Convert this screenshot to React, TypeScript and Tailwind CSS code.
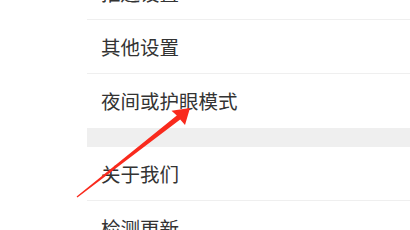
const rows = [
  { label: "推送设置", divider: true },
  { label: "其他设置", divider: true },
  { label: "夜间或护眼模式", divider: false },
];

const rowsAfter = [
  { label: "关于我们", divider: true },
  { label: "检测更新", divider: true },
];

function Row({ label, divider }: { label: string; divider: boolean }) {
  return (
    <div
      className={`flex h-[54px] items-center pl-[14px] text-[19.5px] text-[#333333] ${
        divider ? "border-b border-[#efefef]" : ""
      }`}
    >
      {label}
    </div>
  );
}

function Arrow() {
  return (
    <svg
      className="pointer-events-none absolute left-0 top-0"
      width="410"
      height="230"
      viewBox="0 0 410 230"
    >
      <polygon
        points="190,108 171.5,110.8 176.8,115.6 76.6,196.4 77.4,197.4 180.2,119.4 185,125"
        fill="#f92a1d"
      />
    </svg>
  );
}

export default function App() {
  return (
    <div
      className="relative h-[230px] w-[410px] overflow-hidden bg-white"
      style={{ fontFamily: '"Noto Sans CJK SC", "Noto Sans", sans-serif' }}
    >
      <div className="ml-[87px] -mt-[34px] flex flex-col">
        {rows.map((r) => (
          <Row key={r.label} {...r} />
        ))}
        <div className="h-[19px] bg-[#efefef]" />
        {rowsAfter.map((r) => (
          <Row key={r.label} {...r} />
        ))}
      </div>
      <Arrow />
    </div>
  );
}
